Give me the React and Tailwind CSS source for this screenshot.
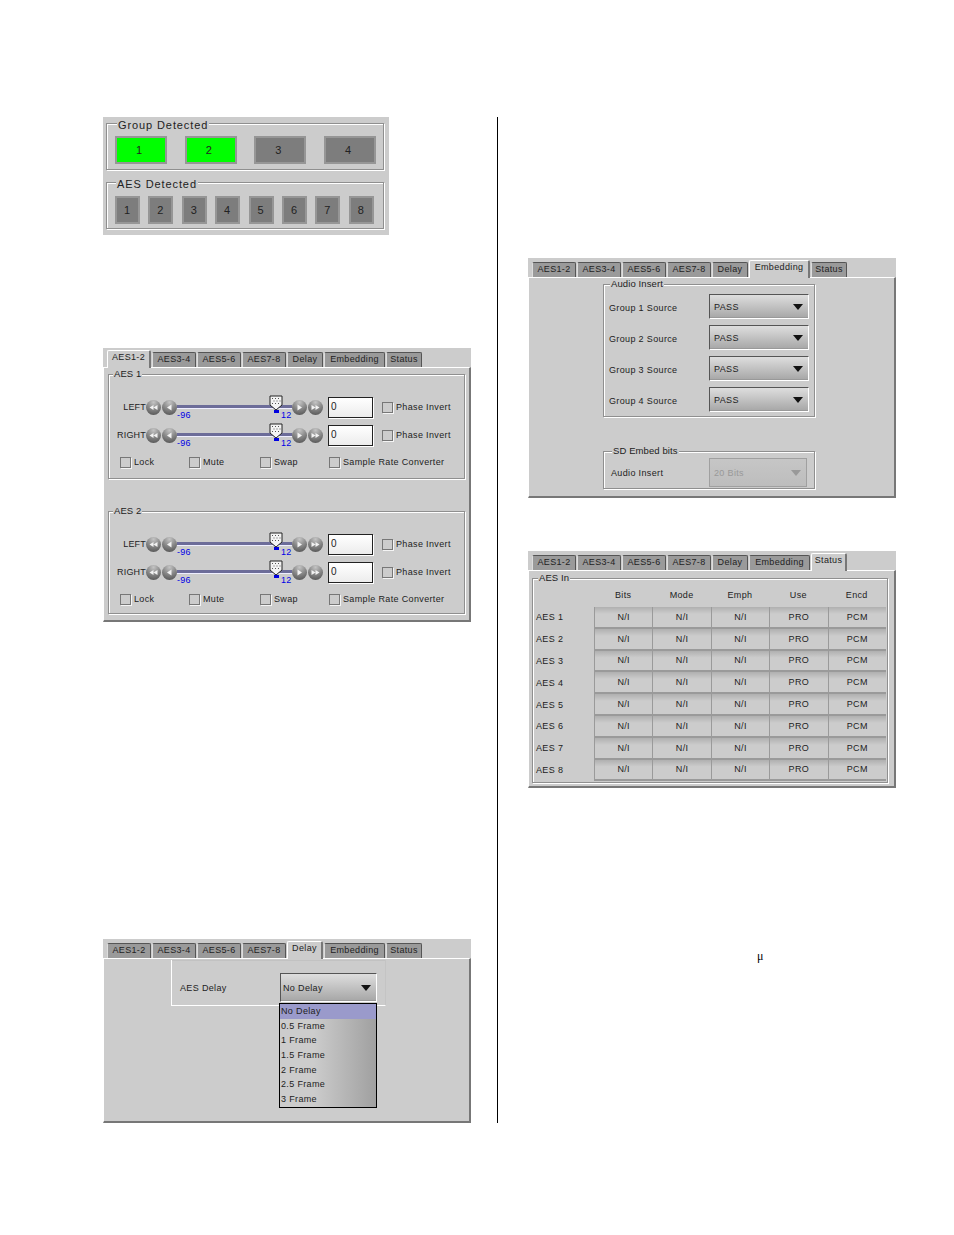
const font = "font-['Liberation_Sans',Arial,sans-serif] text-[9px] tracking-[0.35px] text-[#222] leading-none whitespace-nowrap";
const TABS = [["AES1-2", 44], ["AES3-4", 44], ["AES5-6", 44], ["AES7-8", 44], ["Delay", 36], ["Embedding", 61], ["Status", 36]];

function Tabs({ active }) {
  return (
    <div className="flex h-[17px] items-end gap-px pl-[4px]">
      {TABS.map(([t, w], i) =>
        i === active ? (
          <div key={t} style={{ width: w }} className="relative z-10 -mb-px flex h-[18px] items-start justify-center rounded-t-[2px] border-t border-l border-r-2 border-t-white border-l-white border-r-[#777] bg-[#cccccc] pt-[2px]">
            <span className={font}>{t}</span>
          </div>
        ) : (
          <div key={t} style={{ width: w }} className="flex h-[15px] items-center justify-center rounded-t-[2px] border-t border-l border-r border-[#555] border-l-[#ddd] bg-[#9a9a9a] pb-px">
            <span className={font}>{t}</span>
          </div>
        )
      )}
    </div>
  );
}

function Panel({ active, h, children }) {
  return (
    <div style={{ height: h }} className="flex w-[368px] flex-col bg-[#cccccc] pt-[2px]">
      <Tabs active={active} />
      <div className="relative min-h-0 flex-1 border-t border-l border-r-2 border-b-2 border-t-white border-l-white border-r-[#777] border-b-[#777]">
        {children}
      </div>
    </div>
  );
}

function Group({ title, titleLeft = 7, className = "", children, big }) {
  return (
    <div className={"relative border border-[#8f8f8f] shadow-[1px_1px_0_#ffffff,inset_1px_1px_0_#ffffff] " + className}>
      <span style={{ left: titleLeft }} className={"absolute bg-[#cccccc] px-px " + font + (big ? " -top-[4px] !text-[11px] !tracking-[0.9px]" : " -top-[6px] !text-[9.500px] !tracking-[0.1px]")}>
        {title}
      </span>
      {children}
    </div>
  );
}

function Led({ n, w, on, shift }) {
  return (
    <div style={{ width: w }} className={"flex h-[28px] shrink-0 items-center justify-center border-2 border-[#969696] " + (shift ? "pr-[4px] " : "pr-px ") + (on ? "bg-[#00ff00]" : "bg-[#7d7d7d]")}>
      <span className={font + " !text-[11px] !tracking-normal"}>{n}</span>
    </div>
  );
}

function Round({ glyph }) {
  const g = {
    ll: "M7.5 5 L3.5 7.5 L7.5 10 Z M11.5 5 L7.5 7.5 L11.5 10 Z",
    l: "M9.5 4.5 L5 7.5 L9.5 10.5 Z",
    r: "M5.5 4.5 L10 7.5 L5.5 10.5 Z",
    rr: "M3.5 5 L7.5 7.5 L3.5 10 Z M7.5 5 L11.5 7.5 L7.5 10 Z",
  }[glyph];
  return (
    <div className="h-[15px] w-[15px] shrink-0 rounded-full bg-[radial-gradient(circle_at_50%_15%,#c4c4c4,#8a8a8a_45%,#4a4a4a_100%)]">
      <svg viewBox="0 0 15 15" className="h-[15px] w-[15px]"><path d={g} fill="#f2f2f2" /></svg>
    </div>
  );
}

function Check({ label, w }) {
  return (
    <div style={{ width: w }} className="flex shrink-0 items-center gap-[3px]">
      <div className="h-[11px] w-[11px] shrink-0 border border-[#777] bg-[#cccccc] shadow-[1px_1px_0_#f4f4f4]" />
      <span className={font}>{label}</span>
    </div>
  );
}

function Slider() {
  return (
    <div className="relative h-[22px] w-[115px] shrink-0">
      <div className="absolute left-0 right-0 top-[9px] h-[3px] bg-[#6c6c99] shadow-[0_1px_0_#eeeeff]" />
      <svg viewBox="0 0 14 18" className="absolute left-[92px] -top-[1px] h-[18px] w-[14px]">
        <path d="M5 15h5v3H5z" fill="#0000e0" />
        <path d="M1 1 H13 V10 L7 15 L1 10 Z" fill="#f4f4f4" stroke="#222" strokeWidth="1" />
        <path d="M3 3h1v1H3zM6 3h1v1H6zM9 3h1v1H9zM4.500 5.500h1v1h-1zM7.500 5.500h1v1h-1zM10.500 5.500h1v1h-1zM3 8h1v1H3zM6 8h1v1H6zM9 8h1v1H9z" fill="#555" />
      </svg>
      <span className={font + " absolute left-0 top-[15px] !text-[#0000e6] !tracking-[0.2px]"}>-96</span>
      <span className={font + " absolute left-[104px] top-[15px] !text-[#0000e6] !tracking-[0.2px]"}>12</span>
    </div>
  );
}

function Channel({ label }) {
  return (
    <div className="flex h-[22px] items-center">
      <span className={font + " w-[36px] shrink-0 text-right !tracking-[0.2px]"}>{label}</span>
      <Round glyph="ll" />
      <div className="w-px" />
      <Round glyph="l" />
      <Slider />
      <Round glyph="r" />
      <div className="w-px" />
      <Round glyph="rr" />
      <div className="ml-[5px] flex h-[21px] w-[45px] shrink-0 items-center border border-[#222] bg-[linear-gradient(#ffffff,#ececec)] pl-[2px] shadow-[1px_1px_0_#fff]">
        <span className={font + " !text-[10px]"}>0</span>
      </div>
      <div className="ml-[9px]"><Check label="Phase Invert" /></div>
    </div>
  );
}

function AesGroup({ title, className }) {
  return (
    <Group title={title} titleLeft={4} className={"mx-[4px] pl-[1px] " + className}>
      <div className="flex flex-col gap-[6px]">
        <Channel label="LEFT" />
        <Channel label="RIGHT" />
      </div>
      <div className="mt-[11px] flex items-center pl-[10px]">
        <Check label="Lock" w={69} />
        <Check label="Mute" w={71} />
        <Check label="Swap" w={69} />
        <Check label="Sample Rate Converter" />
      </div>
    </Group>
  );
}

function Drop({ text, w, h = 25, disabled, tight }) {
  return (
    <div style={{ width: w, height: h }} className={"flex shrink-0 items-center justify-between border pr-[5px] " + (tight ? "pl-[2px] " : "pl-[4px] ") + (disabled ? "border-[#a0a0a0] bg-[linear-gradient(#c6c6c6,#bdbdbd)]" : "border-t-[#555] border-l-[#555] border-r-white border-b-white bg-[linear-gradient(#dedede,#a6a6a6)] shadow-[inset_0_-1px_0_#999]")}>
      <span className={font + " pt-px" + (disabled ? " !text-[#999]" : "")}>{text}</span>
      <svg viewBox="0 0 10 6" className="h-[6px] w-[10px]"><path d="M0 0H10L5 6Z" fill={disabled ? "#999" : "#111"} /></svg>
    </div>
  );
}

const SRC = ["Group 1 Source", "Group 2 Source", "Group 3 Source", "Group 4 Source"];
const DELAYS = ["No Delay", "0.5 Frame", "1 Frame", "1.5 Frame", "2 Frame", "2.5 Frame", "3 Frame"];
const COLS = ["Bits", "Mode", "Emph", "Use", "Encd"];
const CELLS = ["N/I", "N/I", "N/I", "PRO", "PCM"];

export default function App() {
  return (
    <div className="flex h-[1235px] w-[954px] bg-white pl-[103px] pt-[117px]">
      <div className="flex w-[368px] shrink-0 flex-col">
        <div className="flex h-[118px] w-[286px] flex-col gap-[12px] bg-[#cccccc] pl-[3px] pt-[6px]">
          <Group title="Group Detected" titleLeft={10} big className="h-[47px] w-[278px] pl-[8px] pt-[12px]">
            <div className="flex gap-[17.700px]">
              <Led n="1" w={52} on shift /><Led n="2" w={52} on shift /><Led n="3" w={52} shift /><Led n="4" w={52} shift />
            </div>
          </Group>
          <Group title="AES Detected" titleLeft={9} big className="h-[47px] w-[278px] pl-[8px] pt-[13px]">
            <div className="flex gap-[8.400px]">
              {[1, 2, 3, 4, 5, 6, 7, 8].map((n) => <Led key={n} n={n} w={25} />)}
            </div>
          </Group>
        </div>

        <div className="mt-[113px]">
          <Panel active={0} h={274}>
            <AesGroup title="AES 1" className="mt-[6px] h-[105px] pt-[21px]" />
            <AesGroup title="AES 2" className="mt-[32px] h-[103px] pt-[21px]" />
          </Panel>
        </div>

        <div className="mt-[317px]">
          <Panel active={4} h={184}>
            <div className="relative ml-[67px] mt-[1px] h-[46px] w-[215px] border-r border-b border-l border-r-[#c4c4c4] border-b-white border-l-white shadow-[inset_0_1px_0_#c2c2c2]">
              <div className="flex items-center pl-[8px] pt-[13px]">
                <span className={font + " w-[100px] pt-[2px]"}>AES Delay</span>
                <Drop text="No Delay" w={97} h={29} tight />
              </div>
              <div className="absolute left-[107px] top-[43px] z-10 w-[98px] border border-black bg-[linear-gradient(90deg,#cccccc_35%,#a0a0a0)]">
                {DELAYS.map((d, i) => (
                  <div key={d} className={"flex h-[14.700px] items-center pl-px " + (i === 0 ? "bg-[#9a9acb]" : "")}>
                    <span className={font}>{d}</span>
                  </div>
                ))}
              </div>
            </div>
          </Panel>
        </div>
      </div>

      <div className="ml-[26px] h-[1006px] w-px shrink-0 bg-black" />

      <div className="ml-[30px] flex w-[369px] shrink-0 flex-col pt-[141px]">
        <Panel active={5} h={240}>
          <div className="ml-[74px] w-[212px] pt-[6px]">
            <Group title="Audio Insert" titleLeft={6} className="h-[133px] pl-[5px] pt-[9px]">
              <div className="flex flex-col gap-[6px]">
                {SRC.map((s) => (
                  <div key={s} className="flex items-center">
                    <span className={font + " w-[100px] pt-[4px]"}>{s}</span>
                    <Drop text="PASS" w={100} />
                  </div>
                ))}
              </div>
            </Group>
            <Group title="SD Embed bits" titleLeft={8} className="mt-[34px] h-[38px] pl-[7px] pt-[6px]">
              <div className="flex items-center">
                <span className={font + " w-[98px] pt-[2px]"}>Audio Insert</span>
                <Drop text="20 Bits" w={98} h={29} disabled />
              </div>
            </Group>
          </div>
        </Panel>

        <div className="mt-[53px]">
          <Panel active={6} h={237}>
            <Group title="AES In" titleLeft={5} className="ml-[3px] mt-[7px] h-[205px] w-[356px] pl-[3px] pt-[12px]">
              <div className="flex pl-[58px]">
                {COLS.map((c) => (
                  <div key={c} className={font + " w-[58.400px] text-center"}>{c}</div>
                ))}
              </div>
              <div className="mt-[7px] flex flex-col">
                {[1, 2, 3, 4, 5, 6, 7, 8].map((n) => (
                  <div key={n} className="flex h-[21.800px] items-stretch">
                    <span className={font + " flex w-[58px] items-center"}>{"AES " + n}</span>
                    {CELLS.map((c, i) => (
                      <div key={i} className="flex w-[58.400px] items-center justify-center border-b-2 border-l border-[#9a9a9a] bg-[linear-gradient(#b0b0b0,#cccccc_35%)] pt-px">
                        <span className={font}>{c}</span>
                      </div>
                    ))}
                  </div>
                ))}
              </div>
            </Group>
          </Panel>
        </div>

        <span className="ml-[229px] mt-[162px] font-['Liberation_Serif',serif] text-[12px] leading-none text-black">μ</span>
      </div>
    </div>
  );
}
